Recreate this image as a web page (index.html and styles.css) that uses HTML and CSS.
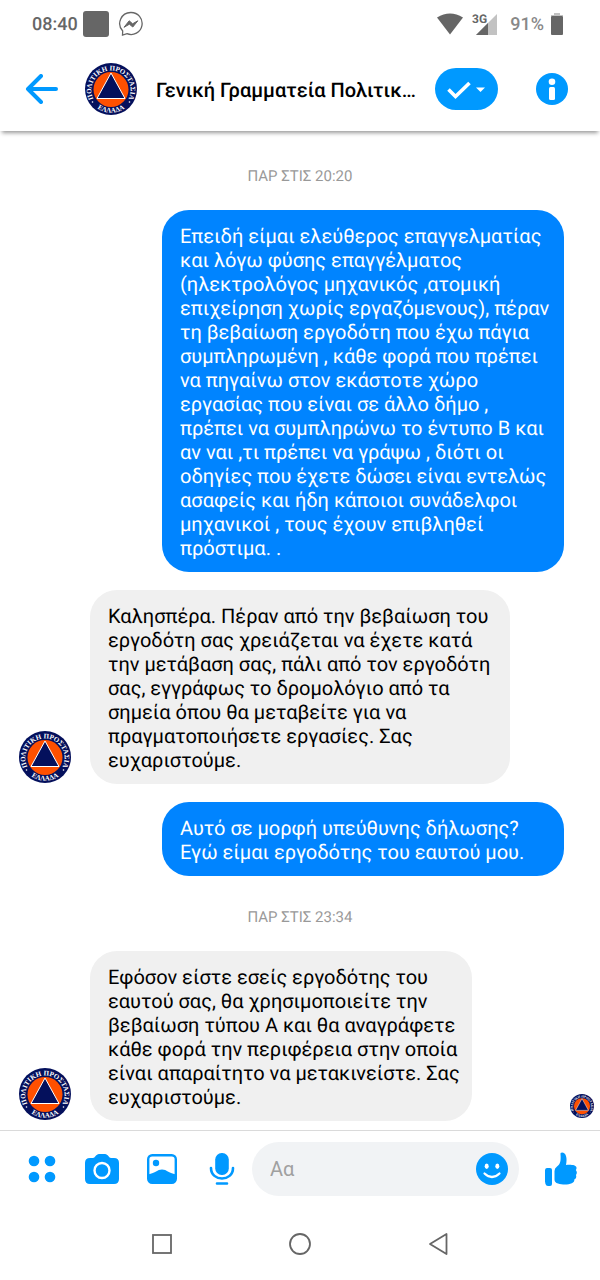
FILE: index.html
```html
<!DOCTYPE html>
<html lang="el">
<head>
<meta charset="utf-8">
<meta name="viewport" content="width=device-width, initial-scale=1">
<title>Γενική Γραμματεία Πολιτικής Προστασίας</title>
<link rel="stylesheet" href="styles.css">
</head>
<body>
<svg class="defs" aria-hidden="true">
  <defs>
    <path id="arc-top" d="M8.300 35.500A19.600 19.600 0 1 1 43.700 35.500"/>
    <path id="arc-bottom" d="M5 37A23.700 23.700 0 0 0 47 37"/>
  </defs>
  <symbol id="emblem" viewBox="0 0 52 52">
    <circle cx="26" cy="26" r="26" fill="#04105c"/>
    <circle cx="26" cy="26.500" r="17.500" fill="#ff5000"/>
    <path d="M26 10 40 35.500H12z" fill="#04105c" stroke="#fff" stroke-width="1"/>
    <text class="emblem-text"><textPath href="#arc-top" startOffset="50%" text-anchor="middle">ΠΟΛΙΤΙΚΗ ΠΡΟΣΤΑΣΙΑ</textPath></text>
    <text class="emblem-text"><textPath href="#arc-bottom" startOffset="50%" text-anchor="middle">ΕΛΛΑΔΑ</textPath></text>
    <circle cx="7.500" cy="39" r=".8" fill="#fff"/>
    <circle cx="44.500" cy="39" r=".8" fill="#fff"/>
  </symbol>
</svg>
<div class="app">
  <div class="status">
    <span class="clock">08:40</span>
    <span class="notice"></span>
    <svg width="26" height="26" viewBox="0 0 26 26"><path d="M13 1.500a11 11 0 1 1-4 21.200L4.500 24l.2-4A11 11 0 0 1 13 1.500z" fill="none" stroke="#666" stroke-width="1.300"/><path d="M6 16.300 11.200 9.800 14.600 12.800 19.800 9.800 14.800 16 11.400 13.200z" fill="#666" stroke="#666"/></svg>
    <svg class="wifi" width="28" height="22" viewBox="0 0 28 22"><path d="M1 4.500Q14-3.500 27 4.500L14 21.500z" fill="#666"/></svg>
    <svg class="signal" width="26" height="24" viewBox="0 0 26 24"><path d="M25 2v21H4z" fill="#c2c2c2"/><path d="M16 11v12H4z" fill="#666"/><text class="signal-text" x="0" y="11">3G</text></svg>
    <span class="percent">91%</span>
    <svg width="12" height="22" viewBox="0 0 12 22"><path d="M0 3V2h3V0h6v2h3v1z" fill="#c2c2c2"/><rect y="3" width="12" height="19" rx="1" fill="#666"/></svg>
  </div>

  <header class="header">
    <button class="icon-button back" aria-label="Πίσω"><svg width="34" height="30" viewBox="0 0 34 30"><path d="M16 2 3 15 16 28M3 15H31" fill="none" stroke="#0099ff" stroke-width="4" stroke-linecap="round" stroke-linejoin="round"/></svg></button>
    <svg class="avatar" role="img" aria-label="Πολιτική Προστασία"><use href="#emblem"/></svg>
    <h1 class="title">Γενική Γραμματεία Πολιτικής Προστασίας</h1>
    <button class="done" aria-label="Ολοκλήρωση"><svg width="63" height="42" viewBox="0 0 63 42"><path d="M13.500 21.500 20.500 28.500 34.500 15" fill="none" stroke="#fff" stroke-width="3.600"/><path d="M41 19.500h9l-4.500 4.500z" fill="#fff"/></svg></button>
    <button class="icon-button" aria-label="Πληροφορίες"><svg width="32" height="32" viewBox="0 0 32 32"><circle cx="16" cy="16" r="16" fill="#0099ff"/><circle cx="16" cy="8.700" r="3.300" fill="#fff"/><rect x="13" y="14" width="6" height="13" rx="1.500" fill="#fff"/></svg></button>
  </header>

  <main class="chat">
    <time class="stamp">ΠΑΡ ΣΤΙΣ 20:20</time>
    <div class="row sent"><p class="bubble">Επειδή είμαι ελεύθερος επαγγελματίας<br>και λόγω φύσης επαγγέλματος<br>(ηλεκτρολόγος μηχανικός ,ατομική<br>επιχείρηση χωρίς εργαζόμενους), πέραν<br>τη βεβαίωση εργοδότη που έχω πάγια<br>συμπληρωμένη , κάθε φορά που πρέπει<br>να πηγαίνω στον εκάστοτε χώρο<br>εργασίας που είναι σε άλλο δήμο ,<br>πρέπει να συμπληρώνω το έντυπο Β και<br>αν ναι ,τι πρέπει να γράψω , διότι οι<br>οδηγίες που έχετε δώσει είναι εντελώς<br>ασαφείς και ήδη κάποιοι συνάδελφοι<br>μηχανικοί , τους έχουν επιβληθεί<br>πρόστιμα. .</p></div>
    <div class="row">
      <svg class="avatar" role="img" aria-label="Πολιτική Προστασία"><use href="#emblem"/></svg>
      <p class="bubble wide">Καλησπέρα. Πέραν από την βεβαίωση του<br>εργοδότη σας χρειάζεται να έχετε κατά<br>την μετάβαση σας, πάλι από τον εργοδότη<br>σας, εγγράφως το δρομολόγιο από τα<br>σημεία όπου θα μεταβείτε για να<br>πραγματοποιήσετε εργασίες. Σας<br>ευχαριστούμε.</p>
    </div>
    <div class="row sent"><p class="bubble">Αυτό σε μορφή υπεύθυνης δήλωσης?<br>Εγώ είμαι εργοδότης του εαυτού μου.</p></div>
    <time class="stamp">ΠΑΡ ΣΤΙΣ 23:34</time>
    <div class="row">
      <svg class="avatar" role="img" aria-label="Πολιτική Προστασία"><use href="#emblem"/></svg>
      <p class="bubble medium">Εφόσον είστε εσείς εργοδότης του<br>εαυτού σας, θα χρησιμοποιείτε την<br>βεβαίωση τύπου Α και θα αναγράφετε<br>κάθε φορά την περιφέρεια στην οποία<br>είναι απαραίτητο να μετακινείστε. Σας<br>ευχαριστούμε.</p>
      <svg class="avatar seen" role="img" aria-label="Διαβάστηκε"><use href="#emblem"/></svg>
    </div>
  </main>

  <footer class="composer">
    <div class="tools">
      <button class="icon-button" aria-label="Περισσότερα"><svg width="36" height="36" viewBox="0 0 36 36" fill="#0099ff"><circle cx="10" cy="10" r="5.300"/><circle cx="26" cy="10" r="5.300"/><circle cx="10" cy="26" r="5.300"/><circle cx="26" cy="26" r="5.300"/></svg></button>
      <button class="icon-button" aria-label="Κάμερα"><svg width="36" height="36" viewBox="0 0 36 36"><path d="M6 7h3c2 0 3-4 6-4h6c3 0 4 4 6 4h3q5 0 5 5v16q0 5-5 5H6q-5 0-5-5V12q0-5 5-5z" fill="#0099ff"/><circle cx="18" cy="19.500" r="7.500" fill="#0099ff" stroke="#fff" stroke-width="2.400"/></svg></button>
      <button class="icon-button" aria-label="Συλλογή"><svg width="36" height="36" viewBox="0 0 36 36"><rect x="4.200" y="4.200" width="27.600" height="27.600" rx="4" fill="#fff" stroke="#0099ff" stroke-width="2.400"/><circle cx="12" cy="12" r="3.200" fill="#0099ff"/><path d="M4 23.500C12 22 13 18.500 18 18.500s6 3.500 14 5V28q0 4-4 4H8q-4 0-4-4z" fill="#0099ff"/></svg></button>
      <button class="icon-button" aria-label="Μικρόφωνο"><svg width="36" height="36" viewBox="0 0 36 36"><rect x="11.200" y="2" width="13.600" height="22" rx="6.500" fill="#0099ff"/><path d="M7 17c0 14 22 14 22 0M13 32.500h10" fill="none" stroke="#0099ff" stroke-width="2.600" stroke-linecap="round"/></svg></button>
    </div>
    <div class="field">
      <input class="input" type="text" placeholder="Aα" aria-label="Μήνυμα">
      <button class="icon-button" aria-label="Emoji"><svg width="32" height="32" viewBox="0 0 32 32"><circle cx="16" cy="16" r="16" fill="#0099ff"/><ellipse cx="10.700" cy="13.300" rx="2" ry="2.700" fill="#fff"/><ellipse cx="21.300" cy="13.300" rx="2" ry="2.700" fill="#fff"/><path d="M8.500 20.500q7.500 7 15 0" fill="none" stroke="#fff" stroke-width="2.200" stroke-linecap="round"/></svg></button>
    </div>
    <button class="icon-button" aria-label="Μου αρέσει"><svg width="34" height="36" viewBox="0 0 34 36" fill="#0099ff"><path d="M2 17h3q2 0 2 2v14q0 2-2 2H3q-2 0-2.500-2Q-1 26 0 19q.3-2 2-2z"/><path d="M15.500 3Q15 1.500 17 1.500c4 0 5.500 5.500 4 12.500 4-.5 10-.3 10.500 2.500q.2 1.500-.7 2.500 2 2.700.2 5 1 3-1.700 4.600.3 2.600-2.500 3.600C23 34 17 33.700 13 32.500q-3.500-.8-3.500-4V20q0-3 2.500-4.500c3.500-2.500 4-6 3.500-12.500z"/></svg></button>
  </footer>

  <nav class="nav">
    <button class="icon-button" aria-label="Πρόσφατα"><svg width="24" height="24" viewBox="0 0 24 24"><rect x="3" y="3" width="18" height="18" fill="none" stroke="#666" stroke-width="1.800"/></svg></button>
    <button class="icon-button" aria-label="Αρχική"><svg width="24" height="24" viewBox="0 0 24 24"><circle cx="12" cy="12" r="10" fill="none" stroke="#666" stroke-width="1.800"/></svg></button>
    <button class="icon-button" aria-label="Πίσω"><svg width="24" height="24" viewBox="0 0 24 24"><path d="M20.500 2v20L4 12z" fill="none" stroke="#666" stroke-width="1.800" stroke-linejoin="round"/></svg></button>
  </nav>
</div>
</body>
</html>
```
FILE: styles.css
```css
* {
  box-sizing: border-box;
}

body {
  margin: 0;
  background: #fff;
  color: #000;
  font-family: Roboto, "Noto Sans", sans-serif;
  text-rendering: geometricPrecision;
}

svg {
  display: block;
  flex: none;
}

.defs {
  position: absolute;
  width: 0;
  height: 0;
}

.emblem-text {
  font: bold 7px "Liberation Serif", serif;
  fill: #fff;
}

.app {
  display: flex;
  flex-direction: column;
  min-height: 100vh;
}

.icon-button {
  padding: 0;
  border: 0;
  background: none;
}

.status {
  display: flex;
  align-items: center;
  height: 48px;
  padding: 0 37px 0 32px;
  color: #666;
  font-size: 18px;
  font-weight: 500;
}

.notice {
  width: 26px;
  height: 26px;
  margin: 0 9px 0 5px;
  border-radius: 3px;
  background: #666;
}

.wifi {
  margin-left: auto;
}

.signal {
  margin: 0 12px 0 8px;
}

.signal-text {
  font-size: 12px;
  font-weight: 700;
  fill: #666;
  stroke: #fff;
  stroke-width: 2px;
  paint-order: stroke;
}

.percent {
  margin-right: 7px;
  color: #888;
}

.header {
  display: flex;
  align-items: center;
  height: 83px;
  padding: 0 32px 2px 25px;
  box-shadow: 0 4px 4px -2px rgba(0, 0, 0, 0.4);
}

.back {
  margin-right: 26px;
}

.avatar {
  width: 52px;
  height: 52px;
}

.title {
  flex: 1;
  min-width: 0;
  margin: 0 18px 0 19px;
  padding-top: 2px;
  overflow: hidden;
  font-size: 20px;
  font-weight: 500;
  line-height: 28px;
  text-overflow: ellipsis;
  white-space: nowrap;
}

.done {
  margin-right: 38px;
  padding: 0;
  border: 0;
  border-radius: 21px;
  background: #0099ff;
}

.chat {
  flex: 1;
  display: flex;
  flex-direction: column;
  gap: 18px;
  padding: 22px 0 9px;
}

.stamp {
  padding: 14px 0 7px;
  color: #999;
  font-size: 15px;
  line-height: 18px;
  text-align: center;
}

.row {
  display: flex;
  align-items: flex-end;
  gap: 19px;
  padding: 0 6px 0 19px;
}

.row > .avatar {
  margin-bottom: 1px;
}

.bubble {
  margin: 0;
  padding: 14px 12px 12px 18px;
  border-radius: 27px;
  background: #f0f0f0;
  font-size: 20px;
  line-height: 24px;
  white-space: nowrap;
}

.sent {
  justify-content: flex-end;
  padding-right: 36px;
}

.sent .bubble {
  width: 402px;
  background: #0084ff;
  color: #fff;
}

.wide {
  width: 420px;
}

.medium {
  width: 382px;
}

.row > .seen {
  width: 24px;
  height: 24px;
  margin: 0 0 3px auto;
}

.composer {
  display: flex;
  align-items: center;
  padding: 11px 21px 12px 24px;
  border-top: 1px solid #dadada;
}

.tools {
  display: flex;
  gap: 24px;
}

.field {
  flex: 1;
  display: flex;
  align-items: center;
  min-width: 0;
  height: 54px;
  margin: 0 26px 0 12px;
  padding: 0 11px 0 18px;
  border-radius: 27px;
  background: #f1f3f5;
}

.input {
  flex: 1;
  min-width: 0;
  padding: 0;
  border: 0;
  outline: 0;
  background: none;
  font: 20px Roboto, sans-serif;
}

.input::placeholder {
  color: #a0a0a0;
}

.nav {
  display: flex;
  justify-content: center;
  gap: 114px;
  padding: 24px 0;
}
```
